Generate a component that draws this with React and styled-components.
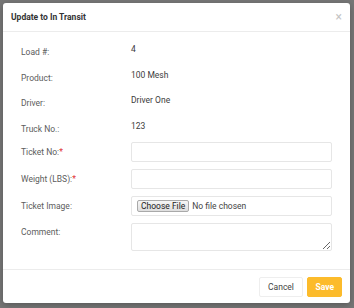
import React from 'react';
import styled, { createGlobalStyle } from 'styled-components';

const GlobalStyle = createGlobalStyle`
  html, body {
    margin: 0;
    padding: 0;
    background: #767676;
    font-family: Roboto, "Liberation Sans", sans-serif;
  }
`;

const Screen = styled.div`
  position: relative;
  width: 354px;
  height: 308px;
  overflow: hidden;
  background: #767676;
`;

const Backdrop = styled.div`
  display: flex;
  gap: 40px;
  padding-left: 17px;
  margin-top: -8px;
  font-size: 9px;
  color: #2a2a2a;
  height: 11px;
`;

const Modal = styled.div`
  position: absolute;
  left: 3px;
  top: 3px;
  width: 347px;
  height: 300px;
  background: #fff;
  border-radius: 3px;
  box-shadow: 0 2px 6px rgba(0, 0, 0, 0.25);
  display: flex;
  flex-direction: column;
`;

const Header = styled.div`
  height: 28px;
  border-bottom: 1px solid #ececec;
  display: flex;
  align-items: center;
  justify-content: space-between;
  padding: 0 8px;
`;

const Title = styled.h4`
  margin: 0;
  font-size: 8.5px;
  font-weight: 700;
  color: #333;
`;

const Close = styled.span`
  font-size: 12px;
  color: #c4c4c4;
  line-height: 1;
  margin-right: 0;
`;

const Body = styled.div`
  flex: 1;
  padding: 7px 18px 0 18px;
`;

const StaticRow = styled.div`
  display: grid;
  grid-template-columns: 110px 1fr;
  height: 25.5px;
`;

const Label = styled.div`
  font-size: 8.5px;
  line-height: 11px;
  color: #5c5c5c;
  padding-top: ${p => p.$top}px;
`;

const Value = styled.div`
  font-size: 8.5px;
  line-height: 11px;
  color: #3c3c3c;
  padding-top: 5px;
`;

const Required = styled.span`
  color: #e03131;
`;

const FieldList = styled.div`
  margin-top: 1px;
  display: flex;
  flex-direction: column;
  gap: 7px;
`;

const FieldRow = styled.div`
  display: grid;
  grid-template-columns: 110px 1fr;
  align-items: ${p => (p.$top ? 'start' : 'center')};
`;

const TextInput = styled.input`
  box-sizing: border-box;
  width: 201px;
  height: 20px;
  border: 1px solid #e6e6e6;
  border-radius: 2px;
  outline: none;
  font-size: 8.5px;
`;

const FileBox = styled.div`
  box-sizing: border-box;
  width: 201px;
  height: 20px;
  border: 1px solid #e6e6e6;
  border-radius: 2px;
  display: flex;
  align-items: center;
  padding-left: 5px;
  input {
    font-family: Roboto, "Liberation Sans", sans-serif;
    font-size: 8.5px;
    color: #444;
    width: 190px;
  }
  input::file-selector-button {
    font-family: Roboto, "Liberation Sans", sans-serif;
    font-size: 8.5px;
    height: 12px;
    padding: 0 3px;
    margin-right: 3px;
    background: linear-gradient(#f6f6f6, #dedede);
    border: 1px solid #a9a9a9;
    border-radius: 2px;
    color: #222;
  }
`;

const Comment = styled.textarea`
  box-sizing: border-box;
  width: 201px;
  height: 28px;
  border: 1px solid #e6e6e6;
  border-radius: 2px;
  outline: none;
  font-size: 8.5px;
  display: block;
`;

const Footer = styled.div`
  border-top: 1px solid #ececec;
  display: flex;
  justify-content: flex-end;
  gap: 4px;
  padding: 7px 8px 6px;
`;

const Button = styled.button`
  height: 20px;
  padding: 0 ${p => (p.$primary ? '7px' : '8.5px')};
  border-radius: 2px;
  font-family: Roboto, "Liberation Sans", sans-serif;
  font-size: 8.5px;
  font-weight: ${p => (p.$primary ? 700 : 400)};
  color: ${p => (p.$primary ? '#fff' : '#444')};
  background: ${p => (p.$primary ? '#fcbb2b' : '#fff')};
  border: 1px solid ${p => (p.$primary ? '#fcbb2b' : '#eeeeee')};
`;

const details = [
  ['Load #:', '4'],
  ['Product:', '100 Mesh'],
  ['Driver:', 'Driver One'],
  ['Truck No.:', '123'],
];

export default function App() {
  return (
    <Screen>
      <GlobalStyle />
      <Backdrop>
        <span>Reference</span>
        <span>KPI</span>
        <span>Users</span>
      </Backdrop>
      <Modal>
        <Header>
          <Title>Update to In Transit</Title>
          <Close>×</Close>
        </Header>
        <Body>
          {details.map(([label, value]) => (
            <StaticRow key={label}>
              <Label $top={8}>{label}</Label>
              <Value>{value}</Value>
            </StaticRow>
          ))}
          <FieldList>
            <FieldRow>
              <Label>Ticket No:<Required>*</Required></Label>
              <TextInput />
            </FieldRow>
            <FieldRow>
              <Label>Weight (LBS):<Required>*</Required></Label>
              <TextInput />
            </FieldRow>
            <FieldRow>
              <Label>Ticket Image:</Label>
              <FileBox>
                <input type="file" />
              </FileBox>
            </FieldRow>
            <FieldRow $top>
              <Label $top={4}>Comment:</Label>
              <Comment />
            </FieldRow>
          </FieldList>
        </Body>
        <Footer>
          <Button>Cancel</Button>
          <Button $primary>Save</Button>
        </Footer>
      </Modal>
    </Screen>
  );
}
